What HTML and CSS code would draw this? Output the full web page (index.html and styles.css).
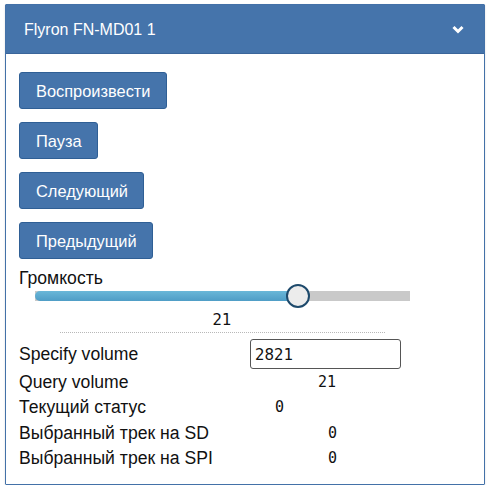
FILE: index.html
```html
<!DOCTYPE html>
<html lang="ru">
<head>
<meta charset="utf-8">
<title>Flyron FN-MD01 1</title>
<link rel="stylesheet" href="styles.css">
</head>
<body>
<div class="panel">
  <div class="panel-head">
    <span class="panel-title">Flyron FN-MD01 1</span>
    <svg class="chevron" width="12" height="9" viewBox="0 0 12 9">
      <path d="M1.5 2 L6 6.5 L10.5 2" fill="none" stroke="#fff" stroke-width="3"/>
    </svg>
  </div>
  <div class="panel-body">
    <div class="btn-list">
      <button class="btn">Воспроизвести</button>
      <button class="btn">Пауза</button>
      <button class="btn">Следующий</button>
      <button class="btn">Предыдущий</button>
    </div>
    <div class="volume">
      <div class="label">Громкость</div>
      <div class="slider">
        <div class="track">
          <div class="fill" style="width: 70%"></div>
          <div class="thumb" style="left: 70%"></div>
        </div>
      </div>
      <div class="slider-value">21</div>
      <div class="divider"></div>
    </div>
    <div class="rows">
      <div class="row">
        <span class="label">Specify volume</span>
        <input class="num-input" type="text" value="2821">
      </div>
      <div class="row">
        <span class="label">Query volume</span>
        <span class="val val-query">21</span>
      </div>
      <div class="row">
        <span class="label">Текущий статус</span>
        <span class="val val-status">0</span>
      </div>
      <div class="row">
        <span class="label">Выбранный трек на SD</span>
        <span class="val val-track">0</span>
      </div>
      <div class="row">
        <span class="label">Выбранный трек на SPI</span>
        <span class="val val-track">0</span>
      </div>
    </div>
  </div>
</div>
</body>
</html>
```

FILE: styles.css
```css
* { box-sizing: border-box; }

body {
  margin: 0;
  padding: 4px 7px 0 5px;
  background: #fff;
  font-family: "Liberation Sans", Arial, sans-serif;
  color: #111;
}

.panel {
  width: 480px;
  border: 1px solid #4371a8;
  border-radius: 1px;
  box-shadow: 0 1px 2px rgba(0,0,0,0.15);
}

.panel-head {
  height: 49px;
  background: #4574ab;
  border-bottom: 1px solid #3a659a;
  display: flex;
  align-items: center;
  justify-content: space-between;
  padding: 0 20px 0 18px;
}

.panel-title {
  color: #fff;
  font-size: 16px;
  padding-top: 1px;
}

.chevron { display: block; margin-top: 1px; }

.panel-body {
  padding: 18px 13px 13px 13px;
}

.btn-list {
  display: flex;
  flex-direction: column;
  align-items: flex-start;
  gap: 13px;
}

.btn {
  font-family: "Liberation Sans", Arial, sans-serif;
  font-size: 16.4px;
  line-height: 18px;
  color: #fff;
  background: #4574ab;
  border: 1px solid #2f5f95;
  border-radius: 3px;
  padding: 9px 15px 8px 16px;
  height: 37px;
}

.volume { margin-top: 7px; }

.label {
  font-size: 17.6px;
  line-height: 20px;
  color: #111;
}

.volume > .label { padding-top: 2px; }

.slider {
  padding: 3px 61px 0 16px;
}

.track {
  position: relative;
  height: 10px;
  background: #c9c9c9;
}

.fill {
  height: 100%;
  background: linear-gradient(#6ab7d8, #4f9dc6);
  border-radius: 5px 0 0 5px;
}

.thumb {
  position: absolute;
  top: -7px;
  width: 24px;
  height: 24px;
  margin-left: -12px;
  border-radius: 50%;
  background: #ececec;
  border: 2px solid #1e4a6c;
}

.slider-value {
  width: 406px;
  text-align: center;
  font-family: "DejaVu Sans", sans-serif;
  font-size: 15px;
  line-height: 18px;
  margin-top: 10px;
  color: #111;
}

.divider {
  margin: 3px 0 0 41px;
  width: 325px;
  border-top: 1px dotted #b8b8b8;
}

.rows { margin-top: 5px; }

.row {
  display: flex;
  align-items: center;
  height: 25.5px;
}

.row:first-child { height: 31px; }

.row .label { width: 231px; flex: none; }

.num-input {
  width: 151px;
  height: 30px;
  border: 1px solid #555;
  border-radius: 3px;
  padding: 2px 4px 0 4px;
  font-family: "DejaVu Sans", sans-serif;
  font-size: 15px;
  color: #111;
}

.val {
  font-family: "DejaVu Sans Mono", monospace;
  font-size: 15px;
  color: #111;
}

.val-query { margin-left: 68px; }
.val-status { margin-left: 25px; }
.val-track { margin-left: 78px; }
```
